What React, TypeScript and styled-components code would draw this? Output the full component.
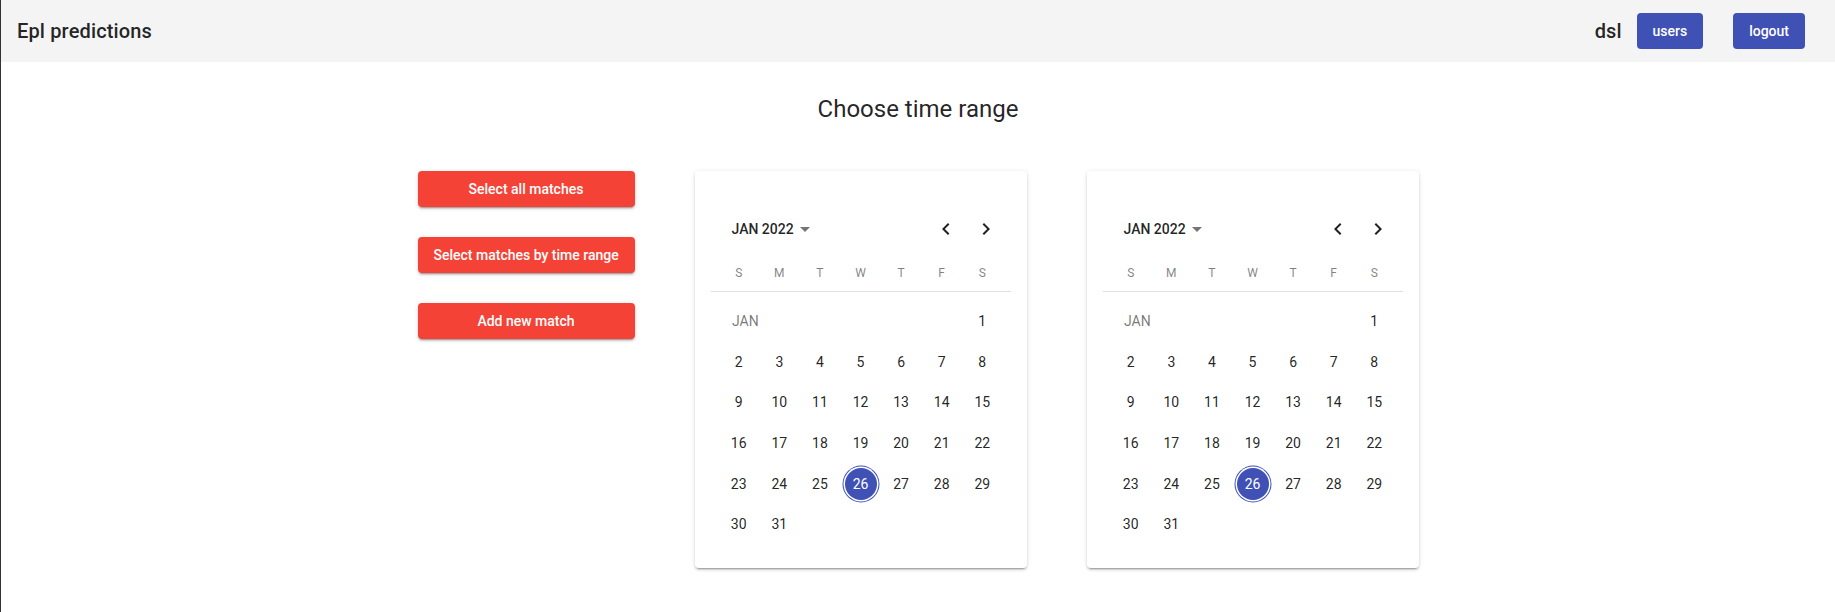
import React from "react";
import styled, { createGlobalStyle } from "styled-components";

const GlobalStyle = createGlobalStyle`
  html, body {
    margin: 0;
    padding: 0;
    background: #ffffff;
    font-family: Roboto, "Liberation Sans", Arial, sans-serif;
  }
  #root {
    min-height: 100vh;
    border-left: 1px solid #333333;
    box-sizing: border-box;
  }
  * { box-sizing: border-box; }
`;

const AppBar = styled.header`
  height: 62px;
  background: #f4f4f4;
  display: flex;
  align-items: center;
  padding: 0 30px 0 16px;
`;

const Brand = styled.h1`
  margin: 0;
  flex: 1;
  font-size: 20px;
  font-weight: 500;
  letter-spacing: 0.0075em;
  line-height: 1.6;
  color: rgba(0, 0, 0, 0.87);
`;

const UserName = styled.span`
  font-size: 20px;
  font-weight: 500;
  line-height: 1.6;
  color: rgba(0, 0, 0, 0.87);
  margin-right: 15px;
`;

const Button = styled.button<{ $tone: "primary" | "secondary"; $gap?: number }>`
  height: 36px;
  padding: 6px 16px;
  border: 0;
  border-radius: 4px;
  font-family: Roboto, "Liberation Sans", Arial, sans-serif;
  font-size: 14px;
  font-weight: 500;
  letter-spacing: 0;
  line-height: 1.75;
  white-space: nowrap;
  color: #ffffff;
  cursor: pointer;
  background: ${(p) => (p.$tone === "primary" ? "#3f51b5" : "#f44336")};
  margin-left: ${(p) => p.$gap ?? 0}px;
  box-shadow: ${(p) =>
    p.$tone === "secondary"
      ? "0px 3px 1px -2px rgba(0,0,0,0.2), 0px 2px 2px 0px rgba(0,0,0,0.14), 0px 1px 5px 0px rgba(0,0,0,0.12)"
      : "none"};
`;

const Main = styled.main`
  display: flex;
  flex-direction: column;
  align-items: center;
  padding-top: 31px;
`;

const PageTitle = styled.h2`
  margin: 0;
  font-size: 24px;
  font-weight: 400;
  line-height: 32px;
  color: rgba(0, 0, 0, 0.87);
`;

const Content = styled.div`
  display: flex;
  gap: 60px;
  margin-top: 46px;
  align-items: flex-start;
`;

const ActionColumn = styled.div`
  width: 217px;
  display: flex;
  flex-direction: column;
  gap: 30px;
`;

const Card = styled.div`
  width: 332px;
  background: #ffffff;
  border-radius: 4px;
  padding: 40px 16px 23px;
  box-shadow: 0px 3px 1px -2px rgba(0,0,0,0.2), 0px 2px 2px 0px rgba(0,0,0,0.14), 0px 1px 5px 0px rgba(0,0,0,0.12);
`;

const CalHeader = styled.div`
  height: 36px;
  display: flex;
  align-items: center;
  padding-left: 21px;
  padding-right: 5px;
`;

const PeriodButton = styled.div`
  flex: 1;
  display: flex;
  align-items: center;
  font-size: 14px;
  font-weight: 500;
  color: rgba(0, 0, 0, 0.87);
`;

const DropArrow = styled.svg`
  margin-left: 6px;
  width: 10px;
  height: 5px;
  fill: #757575;
`;

const NavButton = styled.div`
  width: 40px;
  height: 36px;
  display: flex;
  align-items: center;
  justify-content: center;
  color: rgba(0, 0, 0, 0.87);
`;

const Grid = styled.div`
  display: grid;
  grid-template-columns: repeat(7, 40.6px);
  justify-content: center;
`;

const WeekRow = styled(Grid)`
  margin-top: 14px;
  height: 24px;
  align-items: center;
`;

const WeekDay = styled.span`
  text-align: center;
  font-size: 12px;
  font-weight: 400;
  color: rgba(0, 0, 0, 0.5);
`;

const Divider = styled.div`
  height: 1px;
  background: #e0e0e0;
  margin-top: 6px;
`;

const DaysGrid = styled(Grid)`
  margin-top: 9px;
  grid-auto-rows: 40.6px;
  align-items: center;
`;

const MonthLabel = styled.span`
  grid-column: span 6;
  padding-left: 13.5px;
  font-size: 14px;
  color: rgba(0, 0, 0, 0.54);
`;

const Day = styled.span<{ $selected?: boolean }>`
  justify-self: center;
  width: 32px;
  height: 32px;
  border-radius: 50%;
  display: flex;
  align-items: center;
  justify-content: center;
  font-size: 14px;
  color: ${(p) => (p.$selected ? "#ffffff" : "rgba(0, 0, 0, 0.87)")};
  background: ${(p) => (p.$selected ? "#3f51b5" : "transparent")};
  box-shadow: ${(p) =>
    p.$selected ? "0 0 0 1.5px #ffffff, 0 0 0 2.5px #3f51b5" : "none"};
`;

const ChevronLeft = () => (
  <svg width="24" height="24" viewBox="0 0 24 24" fill="currentColor">
    <path d="M15.41 7.41 14 6l-6 6 6 6 1.41-1.41L10.83 12z" />
  </svg>
);

const ChevronRight = () => (
  <svg width="24" height="24" viewBox="0 0 24 24" fill="currentColor">
    <path d="M10 6 8.59 7.41 13.17 12l-4.58 4.59L10 18l6-6z" />
  </svg>
);

const weekDays = ["S", "M", "T", "W", "T", "F", "S"];

const Calendar = ({ selected }: { selected: number }) => {
  const days = Array.from({ length: 30 }, (_, i) => i + 2);
  return (
    <Card>
      <CalHeader>
        <PeriodButton>
          JAN 2022
          <DropArrow viewBox="0 0 10 5">
            <polygon points="0,0 5,5 10,0" />
          </DropArrow>
        </PeriodButton>
        <NavButton>
          <ChevronLeft />
        </NavButton>
        <NavButton>
          <ChevronRight />
        </NavButton>
      </CalHeader>
      <WeekRow>
        {weekDays.map((d, i) => (
          <WeekDay key={i}>{d}</WeekDay>
        ))}
      </WeekRow>
      <Divider />
      <DaysGrid>
        <MonthLabel>JAN</MonthLabel>
        <Day>1</Day>
        {days.map((d) => (
          <Day key={d} $selected={d === selected}>
            {d}
          </Day>
        ))}
      </DaysGrid>
    </Card>
  );
};

export default function App() {
  return (
    <>
      <GlobalStyle />
      <AppBar>
        <Brand>Epl predictions</Brand>
        <UserName>dsl</UserName>
        <Button $tone="primary">users</Button>
        <Button $tone="primary" $gap={30}>
          logout
        </Button>
      </AppBar>
      <Main>
        <PageTitle>Choose time range</PageTitle>
        <Content>
          <ActionColumn>
            <Button $tone="secondary">Select all matches</Button>
            <Button $tone="secondary">Select matches by time range</Button>
            <Button $tone="secondary">Add new match</Button>
          </ActionColumn>
          <Calendar selected={26} />
          <Calendar selected={26} />
        </Content>
      </Main>
    </>
  );
}
